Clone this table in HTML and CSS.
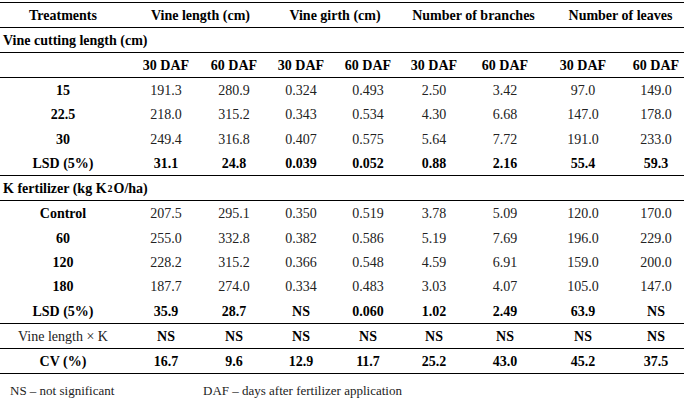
FILE: index.html
```html
<!DOCTYPE html>
<html lang="en">
<head>
<meta charset="utf-8">
<title>Vine cutting length and K fertilizer</title>
<link rel="stylesheet" href="styles.css">
</head>
<body>
<div class="page">
  <div class="tbl" role="table">
    <div class="row head border-top" role="row">
      <div class="c b">Treatments</div>
      <div class="c b span2 g-vl">Vine length (cm)</div>
      <div class="c b span2 g-vg">Vine girth (cm)</div>
      <div class="c b span2 g-nb">Number of branches</div>
      <div class="c b span2 g-nl">Number of leaves</div>
    </div>
    <div class="row section" role="row">
      <div class="c b full">Vine cutting length (cm)</div>
    </div>
    <div class="row sub" role="row">
      <div class="c"></div>
      <div class="c b">30 DAF</div><div class="c b">60 DAF</div>
      <div class="c b">30 DAF</div><div class="c b">60 DAF</div>
      <div class="c b">30 DAF</div><div class="c b">60 DAF</div>
      <div class="c b">30 DAF</div><div class="c b">60 DAF</div>
    </div>
    <div class="row d1" role="row">
      <div class="c b">15</div>
      <div class="c">191.3</div><div class="c">280.9</div>
      <div class="c">0.324</div><div class="c">0.493</div>
      <div class="c">2.50</div><div class="c">3.42</div>
      <div class="c">97.0</div><div class="c">149.0</div>
    </div>
    <div class="row d1" role="row">
      <div class="c b">22.5</div>
      <div class="c">218.0</div><div class="c">315.2</div>
      <div class="c">0.343</div><div class="c">0.534</div>
      <div class="c">4.30</div><div class="c">6.68</div>
      <div class="c">147.0</div><div class="c">178.0</div>
    </div>
    <div class="row d1" role="row">
      <div class="c b">30</div>
      <div class="c">249.4</div><div class="c">316.8</div>
      <div class="c">0.407</div><div class="c">0.575</div>
      <div class="c">5.64</div><div class="c">7.72</div>
      <div class="c">191.0</div><div class="c">233.0</div>
    </div>
    <div class="row d1 last" role="row">
      <div class="c b">LSD (5%)</div>
      <div class="c b">31.1</div><div class="c b">24.8</div>
      <div class="c b">0.039</div><div class="c b">0.052</div>
      <div class="c b">0.88</div><div class="c b">2.16</div>
      <div class="c b">55.4</div><div class="c b">59.3</div>
    </div>
    <div class="row section" role="row">
      <div class="c b full">K fertilizer (kg K<sub>2</sub>O/ha)</div>
    </div>
    <div class="row d2" role="row">
      <div class="c b">Control</div>
      <div class="c">207.5</div><div class="c">295.1</div>
      <div class="c">0.350</div><div class="c">0.519</div>
      <div class="c">3.78</div><div class="c">5.09</div>
      <div class="c">120.0</div><div class="c">170.0</div>
    </div>
    <div class="row d2" role="row">
      <div class="c b">60</div>
      <div class="c">255.0</div><div class="c">332.8</div>
      <div class="c">0.382</div><div class="c">0.586</div>
      <div class="c">5.19</div><div class="c">7.69</div>
      <div class="c">196.0</div><div class="c">229.0</div>
    </div>
    <div class="row d2" role="row">
      <div class="c b">120</div>
      <div class="c">228.2</div><div class="c">315.2</div>
      <div class="c">0.366</div><div class="c">0.548</div>
      <div class="c">4.59</div><div class="c">6.91</div>
      <div class="c">159.0</div><div class="c">200.0</div>
    </div>
    <div class="row d2" role="row">
      <div class="c b">180</div>
      <div class="c">187.7</div><div class="c">274.0</div>
      <div class="c">0.334</div><div class="c">0.483</div>
      <div class="c">3.03</div><div class="c">4.07</div>
      <div class="c">105.0</div><div class="c">147.0</div>
    </div>
    <div class="row d2 last" role="row">
      <div class="c b">LSD (5%)</div>
      <div class="c b">35.9</div><div class="c b">28.7</div>
      <div class="c b">NS</div><div class="c b">0.060</div>
      <div class="c b">1.02</div><div class="c b">2.49</div>
      <div class="c b">63.9</div><div class="c b">NS</div>
    </div>
    <div class="row single" role="row">
      <div class="c">Vine length × K</div>
      <div class="c b">NS</div><div class="c b">NS</div>
      <div class="c b">NS</div><div class="c b">NS</div>
      <div class="c b">NS</div><div class="c b">NS</div>
      <div class="c b">NS</div><div class="c b">NS</div>
    </div>
    <div class="row single" role="row">
      <div class="c b">CV (%)</div>
      <div class="c b">16.7</div><div class="c b">9.6</div>
      <div class="c b">12.9</div><div class="c b">11.7</div>
      <div class="c b">25.2</div><div class="c b">43.0</div>
      <div class="c b">45.2</div><div class="c b">37.5</div>
    </div>
  </div>
  <div class="notes">
    <span class="note-ns">NS – not significant</span>
    <span class="note-daf">DAF – days after fertilizer application</span>
  </div>
</div>
</body>
</html>
```

FILE: styles.css
```css
html, body {
  margin: 0;
  padding: 0;
  background: #ffffff;
}

.page {
  width: 684px;
  padding-top: 2px;
  font-family: "Liberation Serif", "Times New Roman", serif;
  font-size: 14px;
  color: #222222;
}

.tbl {
  display: flex;
  flex-direction: column;
}

.row {
  display: grid;
  grid-template-columns: 126px 80px 56px 78px 56px 76px 66px 90px 56px;
  box-sizing: border-box;
  height: 24px;
}

.border-top {
  border-top: 1px solid #000;
  height: 25px;
}

.head,
.section,
.sub,
.last,
.single {
  border-bottom: 1px solid #000;
}

.head { height: 26px; }
.section { height: 25px; }
.sub { height: 25px; }
.single { height: 25px; }

.d1 { height: 24.25px; }
.d1.last { height: 25.25px; }
.d2 { height: 24.4px; }
.d2.last { height: 25.4px; }

.c {
  display: flex;
  align-items: center;
  justify-content: center;
  white-space: nowrap;
  padding-top: 2px;
  line-height: 16px;
}

.b {
  font-weight: bold;
  color: #000;
}

.span2 { grid-column: span 2; }

.g-vl { padding-left: 13px; }
.g-vg { padding-left: 12px; }
.g-nb { padding-left: 13px; }
.g-nl { padding-left: 19px; }

.full {
  grid-column: 1 / -1;
  justify-content: flex-start;
  padding-left: 3px;
}

sub {
  font-size: 10px;
  line-height: 0;
  vertical-align: -4px;
  padding: 0 1px;
}

.notes {
  display: flex;
  margin-top: 9px;
  font-size: 13px;
  line-height: 16px;
  color: #222;
}

.note-ns {
  width: 193px;
  padding-left: 10px;
}
```
